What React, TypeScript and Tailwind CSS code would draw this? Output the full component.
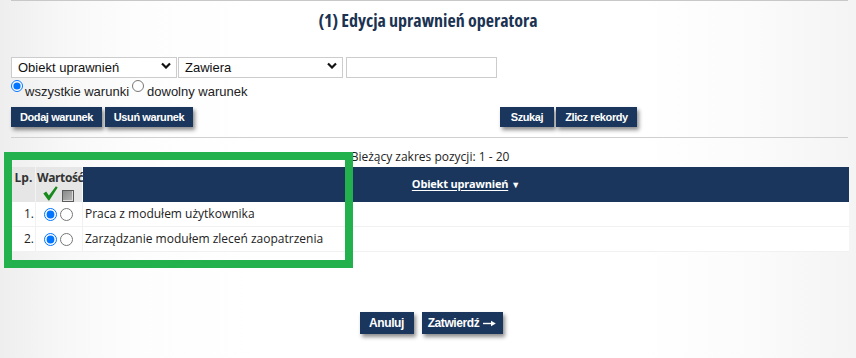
import React from "react";

const navy = "bg-[#1a365c]";

function Chevron() {
  return (
    <svg
      className="pointer-events-none absolute right-[6px] top-[7px]"
      width="10"
      height="7"
      viewBox="0 0 10 7"
    >
      <polyline points="1,1.5 5,5.5 9,1.5" fill="none" stroke="#111" strokeWidth="2.2" />
    </svg>
  );
}

function Select({ value, width }: { value: string; width: string }) {
  return (
    <div className={`relative ${width}`}>
      <select
        className="h-[21px] w-full appearance-none border border-[#cccccc] bg-white pl-[6px] text-[13px] leading-[19px] text-[#111]"
        defaultValue={value}
      >
        <option>{value}</option>
      </select>
      <Chevron />
    </div>
  );
}

function Btn({
  children,
  w,
  h = "h-[20px]",
  size = "text-[11px]",
}: {
  children: React.ReactNode;
  w: string;
  h?: string;
  size?: string;
}) {
  return (
    <button
      className={`${w} ${h} ${navy} ${size} flex items-center justify-center font-bold tracking-[-0.4px] text-white shadow-[2px_3px_4px_rgba(0,0,0,0.45)] font-['Liberation_Sans',Arial,sans-serif]`}
    >
      {children}
    </button>
  );
}

function Check() {
  return (
    <svg width="15" height="15" viewBox="0 0 15 15">
      <path d="M0.3 7.6 L3.2 5.6 L5.9 9.6 L12.9 0.3 L14.7 1.6 L6.3 14.6 L5.4 14.6 Z" fill="#178a1c" />
    </svg>
  );
}

function Arrow() {
  return (
    <svg width="13" height="7" viewBox="0 0 13 7" className="ml-[4px]">
      <line x1="0" y1="3.5" x2="10" y2="3.5" stroke="white" strokeWidth="1.4" />
      <path d="M8 0.8 L12.8 3.5 L8 6.2 Z" fill="white" />
    </svg>
  );
}

function Row({ n, text }: { n: string; text: string }) {
  return (
    <>
      <div className="bg-white pr-[1px] text-right text-[12px] leading-[24px] text-[#222]">{n}</div>
      <div className="flex items-center gap-[3px] bg-white pl-[8px]">
        <input type="radio" name={`r${n}`} defaultChecked className="m-0 h-[13px] w-[13px]" />
        <input type="radio" name={`r${n}`} className="m-0 h-[13px] w-[13px]" />
      </div>
      <div className="bg-white pl-[2px] text-[12px] leading-[24px] text-[#222]">{text}</div>
    </>
  );
}

export default function App() {
  return (
    <div className="relative min-h-[358px] w-full overflow-hidden bg-[linear-gradient(to_right,#eeeeee_0%,#f8f8f8_8%,#fdfdfd_16%,#ffffff_30%,#ffffff_75%,#fbfbfb_88%,#f4f4f4_100%)] font-['Liberation_Sans',Arial,sans-serif] text-[#111]">
      <div className="ml-[11px] mr-[8px] border-t border-[#c8c8c8]" />

      <h1 className="mt-[7px] text-center font-['Open_Sans',sans-serif] text-[18px] font-bold leading-[24px] text-[#1b3352] font-stretch-condensed">
        (1) Edycja uprawnień operatora
      </h1>

      <div className="ml-[11px] mr-[7px]">
        <div className="mt-[23px] w-[626px]">
          <div className="flex items-center">
            <Select value="Obiekt uprawnień" width="w-[166px]" />
            <div className="w-[1px]" />
            <Select value="Zawiera" width="w-[165px]" />
            <div className="w-[3px]" />
            <input className="h-[21px] w-[151px] border border-[#cccccc] bg-white" />
          </div>

          <div className="mt-[4px] flex items-baseline text-[13px] leading-[18px] text-[#222]">
            <label className="flex items-baseline">
              <input type="radio" name="cond" defaultChecked className="relative top-[-4px] m-0 h-[12px] w-[12px]" />
              <span className="ml-[2px]">wszystkie warunki</span>
            </label>
            <label className="ml-[3px] flex items-baseline">
              <input type="radio" name="cond" className="relative top-[-4px] m-0 h-[12px] w-[12px]" />
              <span className="ml-[3px]">dowolny warunek</span>
            </label>
          </div>

          <div className="mt-[6px] flex justify-between">
            <div className="flex gap-[3px]">
              <Btn w="w-[91px]">Dodaj warunek</Btn>
              <Btn w="w-[88px]">Usuń warunek</Btn>
            </div>
            <div className="flex gap-[2px]">
              <Btn w="w-[54px]">Szukaj</Btn>
              <Btn w="w-[81px]">Zlicz rekordy</Btn>
            </div>
          </div>
        </div>

        <div className="mr-[1px] mt-[10px] border-t border-[#d0d0d0]" />

        <div className="mt-[10px] text-center font-['Open_Sans',sans-serif] text-[12px] leading-[18px] text-[#222]">
          Bieżący zakres pozycji: 1 - 20
        </div>

        <div className="ml-[1px] mt-[1px] font-['Open_Sans',sans-serif]">
          <div className="grid h-[35px] grid-cols-[23px_46px_1fr] gap-[1px]">
            <div className="bg-[#e6e6e6] pt-[3px] text-center text-[12px] font-bold leading-[16px] text-[#333]">Lp.</div>
            <div className="flex flex-col bg-[#e6e6e6] pt-[3px]">
              <div className="whitespace-nowrap pl-[1px] text-[12px] font-bold leading-[16px] tracking-[-0.4px] text-[#333]">Wartość</div>
              <div className="ml-[7px] flex items-end gap-[4px]">
                <Check />
                <div className="mb-[-1px] h-[12px] w-[12px] border border-[#5a5a5a] bg-[linear-gradient(135deg,#8a8a8a,#b8b8b8)] shadow-[inset_-1px_-1px_0_#dcdcdc]" />
              </div>
            </div>
            <div className={`${navy} pt-[3px] text-center`}>
              <span className="text-[11px] font-bold leading-[16px] tracking-[-0.2px] text-white underline underline-offset-2">Obiekt uprawnień</span>
              <span className="ml-[3px] text-[9px] text-white">▼</span>
            </div>
          </div>
          <div className="grid grid-cols-[23px_46px_1fr] gap-[1px] bg-[#f1f1f1] pb-[1px]">
            <Row n="1." text="Praca z modułem użytkownika" />
            <Row n="2." text="Zarządzanie modułem zleceń zaopatrzenia" />
          </div>
        </div>

        <div className="mt-[60px] flex justify-center gap-[8px] pl-[2px]">
          <Btn w="w-[54px]" h="h-[22px]" size="text-[12px]">Anuluj</Btn>
          <Btn w="w-[81px]" h="h-[22px]" size="text-[12px]">
            Zatwierdź
            <Arrow />
          </Btn>
        </div>
      </div>

      <div className="pointer-events-none absolute left-[4px] top-[152px] h-[116px] w-[349px] border-[8px] border-[#22b14c]" />
    </div>
  );
}
